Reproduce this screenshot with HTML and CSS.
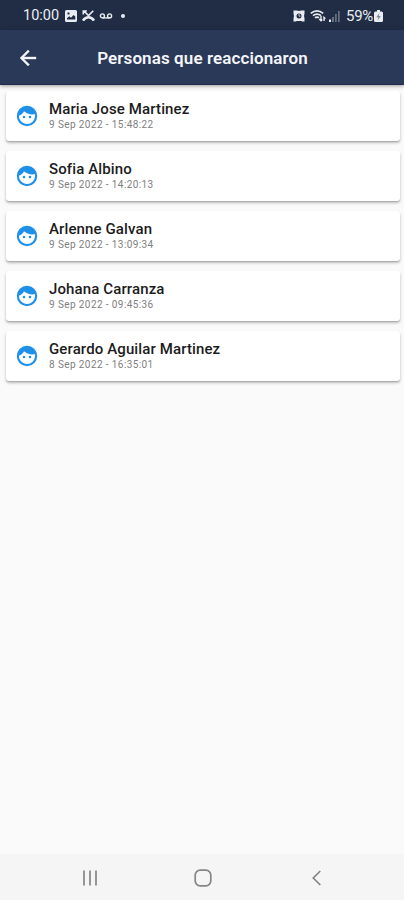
FILE: index.html
```html
<!DOCTYPE html>
<html lang="es">
<head>
  <meta charset="UTF-8">
  <meta name="viewport" content="width=device-width, initial-scale=1">
  <title>Personas que reaccionaron</title>
  <link rel="stylesheet" href="styles.css">
</head>
<body>

  <!-- Shared icon -->
  <svg class="sprite" width="0" height="0">
    <symbol id="face" viewBox="0 0 24 24">
      <path fill-rule="evenodd" d="M12 1.800a10.200 10.200 0 1 0 0 20.400 10.200 10.200 0 0 0 0-20.400zM3.900 11.700C6.200 10.900 8 9.300 9 7.300c2.200 2.200 5.300 3.200 8.600 3.100.8 0 1.500-.1 2.200-.3.200.6.300 1.200.3 1.900a8.100 8.100 0 0 1-16.200-.3z"/>
      <circle cx="9" cy="13" r="1.300"/>
      <circle cx="15" cy="13" r="1.300"/>
    </symbol>
  </svg>

  <div class="status-bar">
    <div class="status-left">
      <span class="time">10:00</span>
      <svg class="icon-picture" width="12" height="12" viewBox="0 0 12 12">
        <path fill="currentColor" fill-rule="evenodd" d="M1.500 0h9A1.500 1.500 0 0 1 12 1.500v9a1.500 1.500 0 0 1-1.500 1.500h-9A1.500 1.500 0 0 1 0 10.500v-9A1.500 1.500 0 0 1 1.500 0zM2 9.500h8.300V6.500L8.500 5 6 7.800 4.200 6.300 2 8.300zM2.500 2.500v2h2v-2z"/>
      </svg>
      <svg class="icon-missed" width="13" height="12" viewBox="0 0 13 12" fill="none" stroke="currentColor">
        <path stroke-width="1.600" d="M2 1l4.500 4.500L11.300.8M1.300 4.500V1h3.500"/>
        <path stroke-width="2.600" d="M1 10.600Q3.300 7.300 6.500 7.300T12 10.600"/>
      </svg>
      <svg class="icon-voicemail" width="14" height="6" viewBox="0 0 14 6" fill="none" stroke="currentColor" stroke-width="1.400">
        <circle cx="3.400" cy="2.900" r="2"/>
        <circle cx="10.600" cy="2.900" r="2"/>
        <path d="M3.400 4.900h7.200"/>
      </svg>
      <span class="dot"></span>
    </div>
    <div class="status-right">
      <svg class="icon-alarm" width="12" height="12" viewBox="0 0 12 12">
        <path fill="currentColor" fill-rule="evenodd" d="M.5.500h3L6 1 8.500.500h3v3L11 6l.5 2.500v3h-2L8 11H4l-1.500.500h-2v-3L1 6 .500 3.500zM6 3.500a2.500 2.500 0 1 0 0 5 2.500 2.500 0 0 0 0-5z"/>
        <path fill="none" stroke="currentColor" stroke-width=".8" d="M6 4v2.200h1.500"/>
      </svg>
      <svg class="icon-wifi" width="16" height="13" viewBox="0 0 16 13" fill="none" stroke="currentColor" stroke-width="1.700">
        <path d="M.8 4.400Q7-.8 13.200 4.400M3 6.700Q7 3.400 11 6.700M5 8.800Q7 7.300 9 8.800"/>
        <path stroke-width="1.400" d="M11 7v4.500M9.300 10l1.700 1.700 1.300-1.300M14 12V8.500l1.300 1.300"/>
      </svg>
      <svg class="icon-signal" width="11" height="12" viewBox="0 0 11 12">
        <path fill="currentColor" d="M0 9.500h2V12H0z"/>
        <path fill="currentColor" opacity=".35" d="M3 7h2v5H3zM6 4h1.700v8H6zM9 1h1.700v11H9z"/>
      </svg>
      <span class="battery">59%</span>
      <svg class="icon-battery" width="9" height="12" viewBox="0 0 9 12">
        <path fill="currentColor" d="M3 0h3v1.500h1.500Q9 1.500 9 3v7.500Q9 12 7.500 12h-6Q0 12 0 10.500V3q0-1.500 1.500-1.500H3z"/>
        <path fill="#7d8798" d="M5.500 3L2.300 7.300h2L3.600 10.600l3.200-4.500H4.700z"/>
      </svg>
    </div>
  </div>

  <header class="app-bar">
    <svg class="back" width="24" height="24" viewBox="0 0 24 24">
      <path fill="currentColor" stroke="currentColor" stroke-width=".4" d="M20 11H7.830l5.590-5.590L12 4l-8 8 8 8 1.410-1.410L7.830 13H20v-2z"/>
    </svg>
    <h1 class="title">Personas que reaccionaron</h1>
  </header>

  <main class="list">
    <div class="card">
      <svg class="avatar"><use href="#face"/></svg>
      <div class="info">
        <div class="name">Maria Jose Martinez</div>
        <div class="date">9 Sep 2022 - 15:48:22</div>
      </div>
    </div>
    <div class="card">
      <svg class="avatar"><use href="#face"/></svg>
      <div class="info">
        <div class="name">Sofia Albino</div>
        <div class="date">9 Sep 2022 - 14:20:13</div>
      </div>
    </div>
    <div class="card">
      <svg class="avatar"><use href="#face"/></svg>
      <div class="info">
        <div class="name">Arlenne Galvan</div>
        <div class="date">9 Sep 2022 - 13:09:34</div>
      </div>
    </div>
    <div class="card">
      <svg class="avatar"><use href="#face"/></svg>
      <div class="info">
        <div class="name">Johana Carranza</div>
        <div class="date">9 Sep 2022 - 09:45:36</div>
      </div>
    </div>
    <div class="card">
      <svg class="avatar"><use href="#face"/></svg>
      <div class="info">
        <div class="name">Gerardo Aguilar Martinez</div>
        <div class="date">8 Sep 2022 - 16:35:01</div>
      </div>
    </div>
  </main>

  <!-- Android navigation -->
  <nav class="nav-bar">
    <svg width="18" height="18" viewBox="0 0 18 18" fill="none" stroke="currentColor" stroke-width="1.700">
      <path d="M3 1.500v15M9 1.500v15M15 1.500v15"/>
    </svg>
    <svg width="18" height="18" viewBox="0 0 18 18" fill="none" stroke="currentColor" stroke-width="1.700">
      <rect x="1.200" y="1.200" width="15.600" height="15.600" rx="5"/>
    </svg>
    <svg width="18" height="18" viewBox="0 0 18 18" fill="none" stroke="currentColor" stroke-width="1.700">
      <path d="M13.300 2L6.300 9l7 7"/>
    </svg>
  </nav>

</body>
</html>
```

FILE: styles.css
```css
* {
  box-sizing: border-box;
}

body {
  margin: 0;
  height: 100vh;
  display: flex;
  flex-direction: column;
  background: #fafafa;
  font-family: Roboto, "Liberation Sans", sans-serif;
}

.sprite {
  position: absolute;
}

.status-bar {
  height: 30px;
  flex: none;
  display: flex;
  justify-content: space-between;
  align-items: center;
  padding: 1px 21px 0 23px;
  background: #212d45;
  color: #e9edf3;
  font-size: 14.5px;
}

.status-left,
.status-right {
  display: flex;
  align-items: center;
}

.time {
  width: 42px;
}

.icon-missed {
  margin-left: 5px;
}

.icon-voicemail {
  margin-left: 4px;
}

.dot {
  width: 4px;
  height: 4px;
  margin-left: 8px;
  border-radius: 50%;
  background: currentColor;
}

.icon-wifi {
  margin-left: 5px;
}

.icon-signal {
  margin-left: 3px;
}

.battery {
  margin-left: 6px;
  font-size: 15px;
  letter-spacing: -0.3px;
}

.icon-battery {
  margin-left: 1px;
}

.app-bar {
  height: 55px;
  flex: none;
  display: flex;
  align-items: center;
  padding: 1px 16px 0;
  background: #2b3958;
  color: #f4f6fa;
  border-bottom: 1px solid #1d2c4d;
  box-shadow: 0 1px 4px rgba(0, 0, 0, 0.4);
}

.title {
  flex: 1;
  margin: 0 23px 0 0;
  text-align: center;
  font-size: 17px;
  font-weight: 600;
  letter-spacing: 0.1px;
}

.list {
  flex: 1;
  display: flex;
  flex-direction: column;
  gap: 10px;
  padding: 6px 4px 0 6px;
}

.card {
  height: 50px;
  display: flex;
  align-items: center;
  padding: 0 9px 2px;
  background: #fff;
  border-radius: 3px;
  box-shadow: 0 2px 3px rgba(0, 0, 0, 0.25), 0 1px 1px rgba(0, 0, 0, 0.12);
}

.avatar {
  width: 24px;
  height: 24px;
  margin: 2px 10px 0 0;
  fill: #1e90ea;
}

.name {
  font-size: 15px;
  line-height: 18px;
  font-weight: 500;
  letter-spacing: 0.12px;
  color: #1c1c1c;
}

.date {
  font-size: 10px;
  line-height: 13px;
  letter-spacing: 0.4px;
  color: #808080;
}

.nav-bar {
  height: 46px;
  flex: none;
  display: flex;
  justify-content: space-between;
  align-items: center;
  padding: 2px 79px 0 81px;
  background: #f5f5f5;
  color: #858585;
}
```
